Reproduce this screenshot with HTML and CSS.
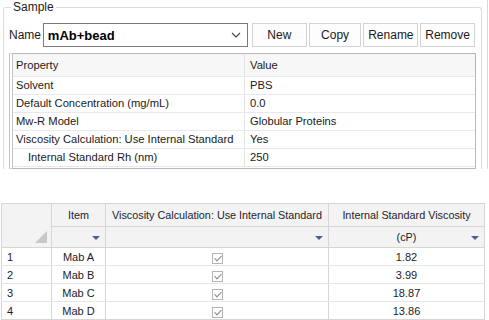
FILE: index.html
```html
<!doctype html>
<html lang="en">
<head>
    <meta charset="UTF-8">
    <title>Sample</title>
    <link rel="stylesheet" href="styles.css">
</head>
<body>
    <div class="top">
        <div class="group">
            <div class="legend">Sample</div>
            <div class="name_row">
                <label class="name_label">Name</label>
                <div class="combo">
                    <span class="combo_text">mAb+bead</span>
                    <svg class="chevron" width="10" height="6" viewBox="0 0 10 6"><path d="M1 1 L5 5 L9 1" fill="none" stroke="#444" stroke-width="1.1"/></svg>
                </div>
                <button class="btn new">New</button>
                <button class="btn copy">Copy</button>
                <button class="btn rename">Rename</button>
                <button class="btn remove">Remove</button>
            </div>
            <div class="props">
                <div class="prow phead">
                    <div class="pname">Property</div>
                    <div class="pval">Value</div>
                </div>
                <div class="prow">
                    <div class="pname">Solvent</div>
                    <div class="pval">PBS</div>
                </div>
                <div class="prow">
                    <div class="pname">Default Concentration (mg/mL)</div>
                    <div class="pval">0.0</div>
                </div>
                <div class="prow">
                    <div class="pname">Mw-R Model</div>
                    <div class="pval">Globular Proteins</div>
                </div>
                <div class="prow">
                    <div class="pname">Viscosity Calculation: Use Internal Standard</div>
                    <div class="pval">Yes</div>
                </div>
                <div class="prow">
                    <div class="pname sub">Internal Standard Rh (nm)</div>
                    <div class="pval">250</div>
                </div>
            </div>
        </div>
    </div>

    <table class="grid">
        <colgroup>
            <col class="c_hdr">
            <col class="c_item">
            <col class="c_visc">
            <col class="c_std">
        </colgroup>
        <tr class="h1">
            <th class="corner" rowspan="2"><div class="corner_tri"></div></th>
            <th>Item</th>
            <th>Viscosity Calculation: Use Internal Standard</th>
            <th>Internal Standard Viscosity</th>
        </tr>
        <tr class="h2">
            <th class="drop"><span class="arrow"></span></th>
            <th class="drop"><span class="arrow"></span></th>
            <th class="drop">(cP)<span class="arrow"></span></th>
        </tr>
        <tr>
            <td class="rnum">1</td>
            <td class="item">Mab A</td>
            <td class="chk"><span class="box"></span></td>
            <td class="num">1.82</td>
        </tr>
        <tr>
            <td class="rnum">2</td>
            <td class="item">Mab B</td>
            <td class="chk"><span class="box"></span></td>
            <td class="num">3.99</td>
        </tr>
        <tr>
            <td class="rnum">3</td>
            <td class="item">Mab C</td>
            <td class="chk"><span class="box"></span></td>
            <td class="num">18.87</td>
        </tr>
        <tr>
            <td class="rnum">4</td>
            <td class="item">Mab D</td>
            <td class="chk"><span class="box"></span></td>
            <td class="num">13.86</td>
        </tr>
    </table>
</body>
</html>
```

FILE: styles.css
```css
* {
    box-sizing: border-box;
}
body {
    margin: 0;
    width: 489px;
    height: 320px;
    overflow: hidden;
    background: #fff;
    font-family: 'Liberation Sans', Arial, sans-serif;
    color: #1a1a1a;
}
.top {
    width: 488px;
    height: 169px;
    padding: 7px 0 0 3px;
    border-right: 1px solid #dadada;
}
.group {
    position: relative;
    width: 479px;
    height: 162px;
    border: 1px solid #dcdcdc;
    border-bottom: none;
    border-radius: 3px 3px 0 0;
    padding: 15px 4px 0 5px;
}
.legend {
    position: absolute;
    top: -8px;
    left: 7px;
    padding: 0 2px;
    background: #fff;
    font-size: 12px;
    color: #222;
}
.name_row {
    display: flex;
    align-items: center;
    height: 24px;
}
.name_label {
    width: 34px;
    font-size: 12px;
}
.combo {
    display: flex;
    align-items: center;
    justify-content: space-between;
    width: 206px;
    height: 24px;
    border: 1px solid #7a7a7a;
    padding: 0 6px 0 4px;
    margin-right: 4px;
}
.combo_text {
    font-weight: bold;
    font-size: 13px;
    color: #000;
}
.btn {
    height: 24px;
    width: 55px;
    margin: 0 2px 0 0;
    padding: 0;
    border: 1px solid #d3d3d3;
    background: #fdfdfd;
    font-family: 'Liberation Sans', Arial, sans-serif;
    font-size: 12px;
    color: #1a1a1a;
}
.btn.copy {
    width: 53px;
}
.props {
    margin-top: 6px;
    width: 467px;
    height: 116px;
    border: 1px solid #b9b9b9;
    border-left: 4px double #c4c4c4;
    font-size: 11.2px;
}
.prow {
    display: flex;
    height: 18px;
    border-bottom: 1px solid #e9e9e9;
}
.prow.phead {
    height: 23px;
    background: #f7f7f7;
}
.pname {
    width: 232px;
    padding: 2px 0 0 3px;
    border-right: 1px solid #e3e3e3;
    white-space: nowrap;
}
.phead .pname,
.phead .pval {
    padding-top: 5px;
}
.pname.sub {
    padding-left: 15px;
}
.pval {
    flex: 1;
    padding: 2px 0 0 5px;
}
.grid {
    margin: 34px 0 0 1px;
    width: 483px;
    border-collapse: collapse;
    table-layout: fixed;
    font-family: 'Liberation Sans', Arial, sans-serif;
    font-size: 11px;
    color: #1c1c2c;
}
.c_hdr { width: 50px; }
.c_item { width: 54px; }
.c_visc { width: 223px; }
.c_std { width: 156px; }
.grid th {
    font-size: 10.8px;
    font-weight: normal;
    background: #f3f3f3;
    border: 1px solid #d6d6d6;
    padding: 0;
    white-space: nowrap;
}
.grid .h1 th {
    height: 23px;
}
.grid .h2 th {
    height: 21px;
}
.grid th.corner {
    position: relative;
}
.corner_tri {
    position: absolute;
    right: 4px;
    bottom: 4px;
    width: 0;
    height: 0;
    border-left: 12px solid transparent;
    border-bottom: 12px solid #c8c8c8;
}
.grid th.drop {
    position: relative;
}
.arrow {
    position: absolute;
    right: 5px;
    top: 9px;
    width: 0;
    height: 0;
    border-left: 4px solid transparent;
    border-right: 4px solid transparent;
    border-top: 4px solid #4f5f94;
}
.grid td {
    height: 18px;
    padding: 0;
    border: 1px solid #e6e6e6;
    border-left-color: #d6d6d6;
    border-right-color: #d6d6d6;
    font-size: 11px;
}
.grid tr:last-child td {
    border-bottom-color: #d6d6d6;
}
.rnum {
    padding-left: 5px !important;
}
.item,
.num,
.chk {
    text-align: center;
}
.box {
    display: inline-block;
    width: 11px;
    height: 11px;
    margin-top: 3px;
    border: 1px solid #b4b4b4;
    background: #fff;
    position: relative;
    vertical-align: top;
}
.box::after {
    content: "";
    position: absolute;
    left: 3px;
    top: 0;
    width: 3px;
    height: 6px;
    border-right: 1px solid #8a8a8a;
    border-bottom: 1px solid #8a8a8a;
    transform: rotate(45deg);
}
```
